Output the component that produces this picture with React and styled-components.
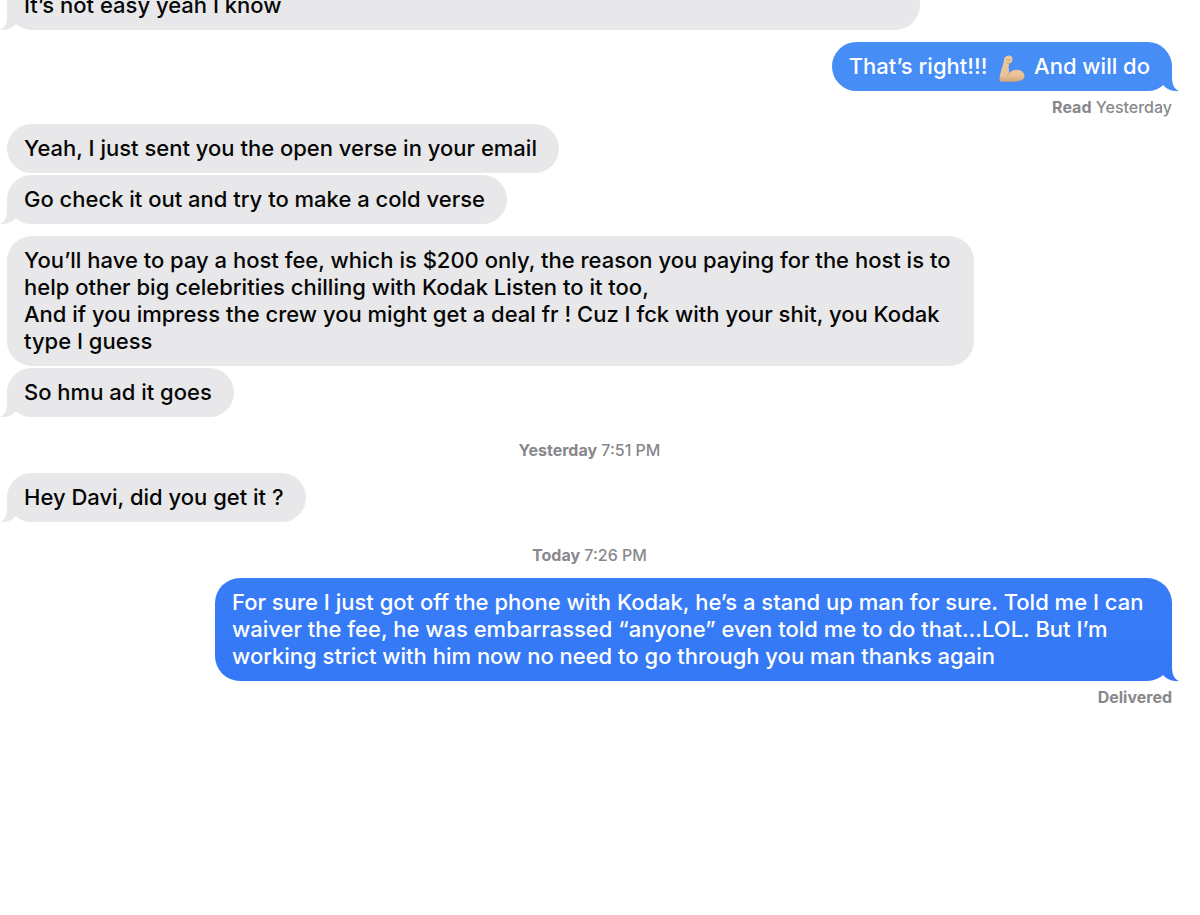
import React from 'react'
import styled, { createGlobalStyle, css } from 'styled-components'

const GlobalStyle = createGlobalStyle`
  body {
    margin: 0;
    background: #fff;
    font-family: Inter, 'Liberation Sans', sans-serif;
  }
`

const Thread = styled.main`
  display: flex;
  flex-direction: column;
  padding: 0 28px 0 7px;
  overflow: hidden;
`

const Group = styled.section`
  display: flex;
  flex-direction: column;
  align-items: ${(p) => (p.$sent ? 'flex-end' : 'flex-start')};
  gap: 2px;
  margin-top: ${(p) => (p.$spaced ? '12px' : '0')};
`

const BubbleBox = styled.div`
  position: relative;
  box-sizing: border-box;
  max-width: 83%;
  padding: 11px 22px 11px 17px;
  border-radius: 25px;
  font-size: 22px;
  font-weight: 500;
  line-height: 27px;
  white-space: pre-line;
  color: #060606;
  background: #e8e8ea;

  ${(p) =>
    p.$sent &&
    css`
      max-width: 957px;
      color: #fff;
      background: ${p.$tone};
    `}

  /* the oldest message is scrolled half out of view */
  ${(p) =>
    p.$scrolled &&
    css`
      width: 913px;
      margin-top: -46px;
      padding-top: 38px;
    `}
`

const TailSvg = styled.svg`
  position: absolute;
  bottom: 0;
  width: 24px;
  height: 25px;
  fill: ${(p) => p.$fill};
  ${(p) => (p.$sent ? 'right: -7px;' : 'left: -7px; transform: scaleX(-1);')}
`

const ArmSvg = styled.svg`
  width: 26px;
  height: 27px;
  margin: -4px 3px -4px 6px;
  vertical-align: -4px;
`

const Receipt = styled.p`
  margin: 0;
  font-size: 16px;
  font-weight: 500;
  line-height: 33px;
  text-align: right;
  color: #88888c;
`

const Stamp = styled(Receipt)`
  padding: 23px 0 13px;
  line-height: 20px;
  text-align: center;
`

const Bubble = ({ sent, tail, scrolled, tone = '#e8e8ea', tailTone = tone, children }) => (
  <BubbleBox $sent={sent} $scrolled={scrolled} $tone={tone}>
    {children}
    {tail && (
      <TailSvg viewBox="0 0 24 25" $sent={sent} $fill={tailTone} aria-hidden="true">
        <path d="M17 0V10C17 18 18.500 22.500 24 25C17.500 25.500 12 23.500 8 19L4 12Z" />
      </TailSvg>
    )}
  </BubbleBox>
)

const Arm = () => (
  <ArmSvg viewBox="0 0 26 27" role="img" aria-label="flexed biceps">
    <defs>
      <linearGradient id="skin" x1="0" y1="0" x2="0" y2="1">
        <stop offset="0" stopColor="#ecca9e" />
        <stop offset="0.75" stopColor="#e8c498" />
        <stop offset="1" stopColor="#d0a478" />
      </linearGradient>
    </defs>
    <path
      fill="url(#skin)"
      d="M5 5.500C5 2.500 7 .6 9.500.5C12 .3 13.700 1.800 13.500 4.200C13.400 6.700 12.200 8.200 10.200 8.500C9.200 11.500 9.700 15 10.500 18C11.500 16 14.500 14.700 18 14.700C22 14.700 25.500 17.500 25.500 21C25.500 24.500 22 26.300 17.500 26.500C12 26.900 6 26.800 1.800 26.500C.7 26.400.3 25.600.4 24.500C.8 17.500 3.800 12 5 5.500Z"
    />
    <path
      fill="none"
      stroke="#c39565"
      strokeWidth="0.700"
      strokeLinecap="round"
      d="M7.500 4.300C8.800 5.300 10.400 5.500 11.600 4.600M10.200 8.400C9 8.500 8 7.900 7.600 7.100M10.500 18C9.900 19.500 9 20.300 7.800 20.500"
    />
  </ArmSvg>
)

const App = () => {
  return (
    <>
      <GlobalStyle />
      <Thread>
        <Group>
          <Bubble tail scrolled>
            It’s not easy yeah I know
          </Bubble>
        </Group>

        <Group $sent $spaced>
          <Bubble sent tail tone="#468df6">
            That’s right!!! <Arm /> And will do
          </Bubble>
        </Group>
        <Receipt>
          <b>Read</b> Yesterday
        </Receipt>

        <Group>
          <Bubble>Yeah, I just sent you the open verse in your email</Bubble>
          <Bubble tail>Go check it out and try to make a cold verse</Bubble>
        </Group>

        <Group $spaced>
          <Bubble>
            You’ll have to pay a host fee, which is $200 only, the reason you paying for the host is to
            {' '}help other big celebrities chilling with Kodak Listen to it too,{'\n'}
            And if you impress the crew you might get a deal fr ! Cuz I fck with your shit, you Kodak
            {' '}type I guess
          </Bubble>
          <Bubble tail>So hmu ad it goes</Bubble>
        </Group>

        <Stamp>
          <b>Yesterday</b> 7:51 PM
        </Stamp>
        <Group>
          <Bubble tail>Hey Davi, did you get it ?</Bubble>
        </Group>

        <Stamp>
          <b>Today</b> 7:26 PM
        </Stamp>
        <Group $sent>
          <Bubble sent tail tone="linear-gradient(#387df6, #3478f6)" tailTone="#3478f6">
            For sure I just got off the phone with Kodak, he’s a stand up man for sure. Told me I can
            {' '}waiver the fee, he was embarrassed “anyone” even told me to do that...LOL. But I’m
            {' '}working strict with him now no need to go through you man thanks again
          </Bubble>
        </Group>
        <Receipt>
          <b>Delivered</b>
        </Receipt>
      </Thread>
    </>
  )
}

export default App
